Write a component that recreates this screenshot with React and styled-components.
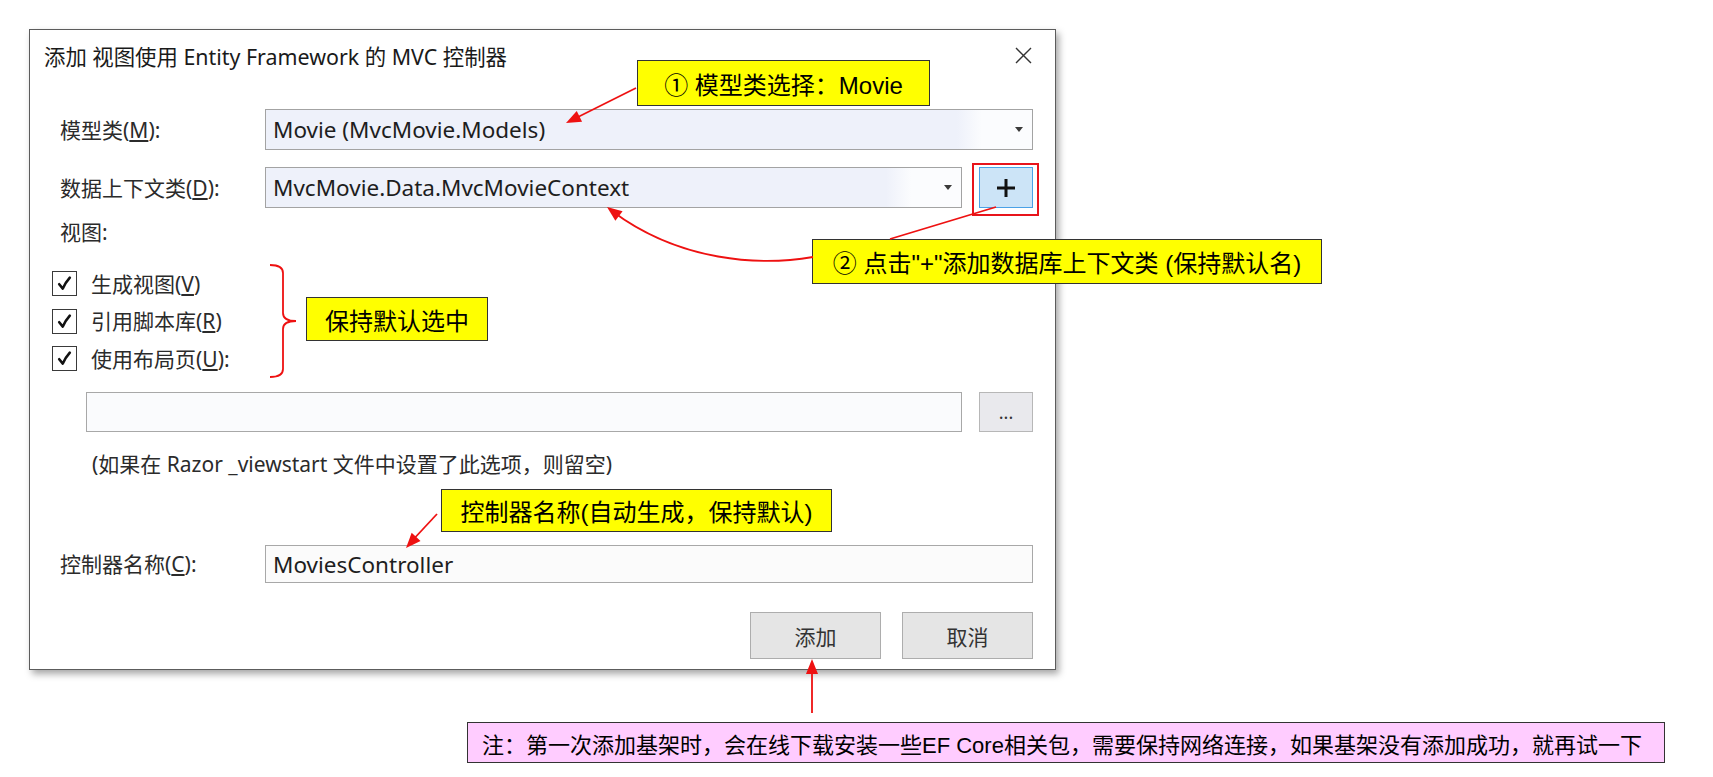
import React from 'react';
import styled, { createGlobalStyle } from 'styled-components';

const GlobalStyle = createGlobalStyle`
  html, body { margin: 0; padding: 0; background: #fff; }
  body { font-family: "Noto Sans", "Noto Sans CJK SC", sans-serif; }
`;

const Canvas = styled.div`
  position: relative;
  width: 1713px;
  height: 777px;
  overflow: hidden;
  background: #fff;
`;

const Dialog = styled.div`
  box-sizing: border-box;
  margin: 29px 0 0 29px;
  width: 1027px;
  height: 641px;
  border: 1px solid #5c5c5c;
  background: #fff;
  box-shadow: 3px 4px 7px rgba(0, 0, 0, 0.35);
  display: flex;
  flex-direction: column;
  color: #2b2b2b;
  font-size: 21px;
`;

const TitleBar = styled.div`
  height: 50px;
  display: flex;
  align-items: center;
  justify-content: space-between;
  padding: 0 23px 0 14px;
  color: #1a1a1a;
  font-size: 21.4px;
`;

const Body = styled.div`
  display: flex;
  flex-direction: column;
  padding: 0 22px 0 30px;
`;

// every row keeps the input column at x = 265 : label column + 17px gap
const FieldRow = styled.div`
  display: grid;
  grid-template-columns: ${p => p.$cols || '188px 1fr'};
  column-gap: 17px;
  align-items: center;
  height: ${p => p.$h}px;
  margin-top: ${p => p.$mt}px;
  padding-left: ${p => p.$pl || 0}px;
`;

const Label = styled.div`
  line-height: 28px;
  white-space: nowrap;
`;

const Combo = styled.div`
  box-sizing: border-box;
  height: 100%;
  border: 1px solid #a3a3a3;
  background: linear-gradient(to right, #eef1fa 0, #eef1fa calc(100% - 75px), #fbfcfe calc(100% - 50px));
  display: flex;
  align-items: center;
  justify-content: space-between;
  padding: 0 9px 0 7px;
  color: #1e1e1e;
  font-size: 22.5px;
`;

const Caret = styled.span`
  width: 0;
  height: 0;
  border-left: 4px solid transparent;
  border-right: 4px solid transparent;
  border-top: 5px solid #3a3a3a;
`;

const TextBox = styled.div`
  box-sizing: border-box;
  height: 100%;
  border: 1px solid #a8a8a8;
  background: ${p => p.$bg || '#fafbfd'};
  display: flex;
  align-items: center;
  padding-left: 7px;
  color: #1e1e1e;
  font-size: 22.5px;
`;

const SmallButton = styled.div`
  box-sizing: border-box;
  height: 100%;
  border: 1px solid ${p => (p.$primary ? '#4aa1e6' : '#b7b7b7')};
  background: ${p => (p.$primary ? '#cce4f7' : '#e9e9ed')};
  display: flex;
  align-items: center;
  justify-content: center;
  color: #333;
  font-size: 18px;
`;

const SectionLabel = styled.div`
  margin-top: 10px;
  line-height: 28px;
`;

const CheckList = styled.div`
  display: flex;
  flex-direction: column;
  gap: 12.5px;
  margin: 25px 0 0 -8px;
`;

const CheckRow = styled.div`
  display: flex;
  align-items: center;
  gap: 14px;
  height: 25px;
`;

const Box = styled.div`
  box-sizing: border-box;
  width: 25px;
  height: 25px;
  border: 1px solid #3a3a3a;
  background: #fff;
  display: flex;
  align-items: center;
  justify-content: center;
`;

const Hint = styled.div`
  margin-top: 18px;
  padding-left: 32px;
  line-height: 28px;
`;

const ButtonBar = styled.div`
  display: flex;
  justify-content: flex-end;
  gap: 21px;
  margin-top: 29px;
`;

const DialogButton = styled.div`
  box-sizing: border-box;
  width: 131px;
  height: 47px;
  border: 1px solid #adadad;
  background: #e5e5e5;
  display: flex;
  align-items: center;
  justify-content: center;
  color: #333;
`;

const Callout = styled.div`
  position: absolute;
  left: ${p => p.$x}px;
  top: ${p => p.$y}px;
  width: ${p => p.$w}px;
  height: ${p => p.$h}px;
  box-sizing: border-box;
  border: 1.5px solid #333;
  background: ${p => p.$bg || '#ffff00'};
  display: flex;
  align-items: center;
  justify-content: ${p => (p.$left ? 'flex-start' : 'center')};
  padding-left: ${p => (p.$left ? 14 : 0)}px;
  font-family: "Liberation Sans", "Noto Sans CJK SC", sans-serif;
  font-size: ${p => p.$fs || 24}px;
  color: #000;
  white-space: nowrap;
`;

const Highlight = styled.div`
  position: absolute;
  left: 972px;
  top: 163px;
  width: 67px;
  height: 53px;
  box-sizing: border-box;
  border: 2px solid #e8141b;
`;

const Overlay = styled.svg`
  position: absolute;
  left: 0;
  top: 0;
  pointer-events: none;
`;

const RED = '#ee1111';

const head = (tx, ty, fx, fy, len = 15, half = 6) => {
  const dx = tx - fx;
  const dy = ty - fy;
  const d = Math.hypot(dx, dy);
  const ux = dx / d;
  const uy = dy / d;
  const bx = tx - ux * len;
  const by = ty - uy * len;
  return `${tx},${ty} ${bx - uy * half},${by + ux * half} ${bx + uy * half},${by - ux * half}`;
};

const Arrows = () => (
  <Overlay width="1713" height="777" viewBox="0 0 1713 777">
    <g stroke={RED} strokeWidth="1.8" fill="none">
      <line x1="636" y1="88" x2="572" y2="120" />
      <path d="M 813 257 C 760 266, 680 262, 612 211" />
      <line x1="996" y1="207" x2="890" y2="239" />
      <line x1="437" y1="514" x2="410" y2="543" />
      <line x1="812" y1="713" x2="812" y2="665" />
      <path d="M 270 265 Q 283 265 283 273 L 283 313 Q 283 321 296 321 Q 283 321 283 329 L 283 369 Q 283 377 270 377" />
    </g>
    <g fill={RED}>
      <polygon points={head(566, 123, 636, 88)} />
      <polygon points={head(607, 207, 680, 262)} />
      <polygon points={head(406, 548, 437, 514)} />
      <polygon points={head(812, 659, 812, 713)} />
    </g>
  </Overlay>
);

const Check = () => (
  <svg width="17" height="17" viewBox="0 0 17 17">
    <path d="M3.2 9.2 L6.8 13.6 Q9 8 13.8 2.6" stroke="#111" strokeWidth="2.6" fill="none" strokeLinejoin="round" strokeLinecap="round" />
  </svg>
);

const CloseIcon = () => (
  <svg width="17" height="17" viewBox="0 0 17 17">
    <path d="M1 1 L16 16 M16 1 L1 16" stroke="#333" strokeWidth="1.4" />
  </svg>
);

const PlusIcon = () => (
  <svg width="18" height="18" viewBox="0 0 18 18">
    <rect x="0" y="7.5" width="18" height="3" fill="#111" />
    <rect x="7.5" y="0" width="3" height="18" fill="#111" />
  </svg>
);

const options = [
  { text: '生成视图', key: 'V', colon: false },
  { text: '引用脚本库', key: 'R', colon: false },
  { text: '使用布局页', key: 'U', colon: true },
];

export default function App() {
  return (
    <Canvas>
      <GlobalStyle />
      <Dialog>
        <TitleBar>
          <span>添加 视图使用 Entity Framework 的 MVC 控制器</span>
          <CloseIcon />
        </TitleBar>
        <Body>
          <FieldRow $h={41} $mt={29}>
            <Label>模型类(<u>M</u>):</Label>
            <Combo>
              <span>Movie (MvcMovie.Models)</span>
              <Caret />
            </Combo>
          </FieldRow>
          <FieldRow $h={41} $mt={17} $cols="188px 1fr 54px">
            <Label>数据上下文类(<u>D</u>):</Label>
            <Combo>
              <span>MvcMovie.Data.MvcMovieContext</span>
              <Caret />
            </Combo>
            <SmallButton $primary>
              <PlusIcon />
            </SmallButton>
          </FieldRow>
          <SectionLabel>视图:</SectionLabel>
          <CheckList>
            {options.map(o => (
              <CheckRow key={o.key}>
                <Box>
                  <Check />
                </Box>
                <Label>
                  {o.text}(<u>{o.key}</u>){o.colon ? ':' : ''}
                </Label>
              </CheckRow>
            ))}
          </CheckList>
          <FieldRow $h={40} $mt={21} $pl={26} $cols="1fr 54px">
            <TextBox />
            <SmallButton>...</SmallButton>
          </FieldRow>
          <Hint>(如果在 Razor _viewstart 文件中设置了此选项，则留空)</Hint>
          <FieldRow $h={38} $mt={67}>
            <Label>控制器名称(<u>C</u>):</Label>
            <TextBox $bg="#fbfbfb">MoviesController</TextBox>
          </FieldRow>
          <ButtonBar>
            <DialogButton>添加</DialogButton>
            <DialogButton>取消</DialogButton>
          </ButtonBar>
        </Body>
      </Dialog>

      <Highlight />
      <Callout $x={637} $y={60} $w={293} $h={46}>① 模型类选择：Movie</Callout>
      <Callout $x={812} $y={239} $w={510} $h={45}>② 点击"+"添加数据库上下文类 (保持默认名)</Callout>
      <Callout $x={306} $y={297} $w={182} $h={44}>保持默认选中</Callout>
      <Callout $x={441} $y={489} $w={391} $h={43}>控制器名称(自动生成，保持默认)</Callout>
      <Callout $x={467} $y={722} $w={1198} $h={41} $bg="#ffccff" $fs={22} $left>
        注：第一次添加基架时，会在线下载安装一些EF Core相关包，需要保持网络连接，如果基架没有添加成功，就再试一下
      </Callout>
      <Arrows />
    </Canvas>
  );
}
